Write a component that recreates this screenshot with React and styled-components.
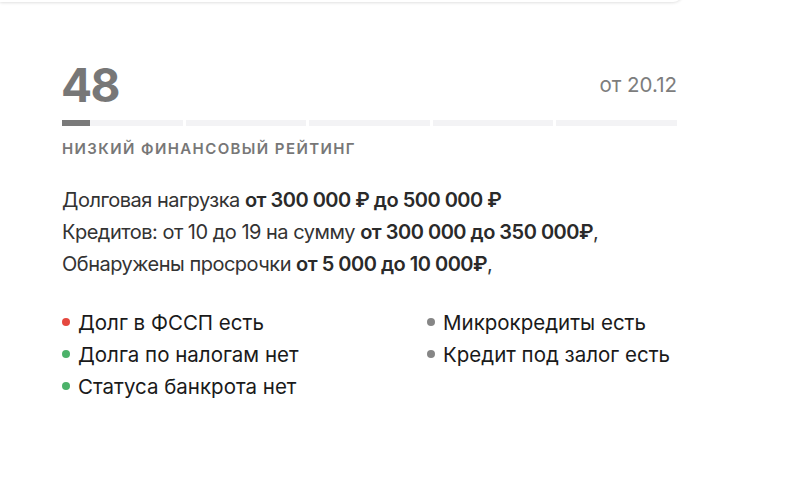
import React from "react";
import styled, { createGlobalStyle } from "styled-components";

const Global = createGlobalStyle`
  html, body { margin: 0; padding: 0; background: #fff; }
  body { font-family: Inter, "Noto Sans", sans-serif; -webkit-font-smoothing: antialiased; }
`;

const Page = styled.div`
  width: 800px;
  height: 504px;
  overflow: hidden;
  background: #fff;
`;

const PrevCard = styled.div`
  width: 683px;
  height: 20px;
  margin-top: -18px;
  border-radius: 0 0 10px 0;
  background: #fff;
  box-shadow: 0 1px 3px rgba(0, 0, 0, 0.12);
`;

const Card = styled.section`
  width: 615px;
  margin: 58px 0 0 62px;
  display: flex;
  flex-direction: column;
`;

const Header = styled.div`
  display: flex;
  align-items: center;
  justify-content: space-between;
  height: 50px;
`;

const Score = styled.div`
  font-size: 46px;
  font-weight: 700;
  color: #777;
  letter-spacing: -1.5px;
  line-height: 1;
  margin-left: -1px;
`;

const DateLabel = styled.div`
  font-size: 20.5px;
  color: #7d7d7d;
  line-height: 1;
`;

const Bar = styled.div`
  margin-top: 10px;
  display: grid;
  grid-template-columns: repeat(5, 1fr);
  gap: 3px;
`;

const Segment = styled.div`
  height: 6px;
  background: #f3f3f5;
  overflow: hidden;
`;

const Fill = styled.div`
  height: 100%;
  background: #7a7a7a;
`;

const RatingLabel = styled.div`
  margin-top: 14px;
  font-size: 15px;
  line-height: 18px;
  font-weight: 600;
  letter-spacing: 1.4px;
  color: #777;
  text-transform: uppercase;
`;

const Details = styled.div`
  margin-top: 26px;
  font-size: 20px;
  line-height: 32px;
  color: #333;
  letter-spacing: -0.5px;
`;

const Line = styled.div``;

const Strong = styled.b`
  font-weight: 600;
  color: #2a2a2a;
`;

const Facts = styled.ul`
  list-style: none;
  margin: 26px 0 0;
  padding: 0;
  display: grid;
  grid-template-columns: 365px 1fr;
  grid-auto-flow: column;
  grid-template-rows: repeat(3, 32px);
`;

const Fact = styled.li`
  display: flex;
  align-items: center;
  gap: 8px;
  font-size: 20.5px;
  color: #1a1a1a;
`;

const Dot = styled.span`
  width: 8px;
  height: 8px;
  border-radius: 50%;
  flex: none;
  background: ${(p) => p.$color};
`;

const colors = { red: "#e5483f", green: "#4cb26a", gray: "#868686" };

const facts = [
  { text: "Долг в ФССП есть", c: "red" },
  { text: "Долга по налогам нет", c: "green" },
  { text: "Статуса банкрота нет", c: "green" },
  { text: "Микрокредиты есть", c: "gray" },
  { text: "Кредит под залог есть", c: "gray" },
];

export default function App() {
  return (
    <Page>
      <Global />
      <PrevCard />
      <Card>
        <Header>
          <Score>48</Score>
          <DateLabel>от 20.12</DateLabel>
        </Header>
        <Bar>
          {[0, 1, 2, 3, 4].map((i) => (
            <Segment key={i}>
              {i === 0 && <Fill style={{ width: "23%" }} />}
            </Segment>
          ))}
        </Bar>
        <RatingLabel>Низкий финансовый рейтинг</RatingLabel>
        <Details>
          <Line>
            Долговая нагрузка <Strong>от 300 000 ₽ до 500 000 ₽</Strong>
          </Line>
          <Line>
            Кредитов: от 10 до 19 на сумму <Strong>от 300 000 до 350 000₽</Strong>,
          </Line>
          <Line>
            Обнаружены просрочки <Strong>от 5 000 до 10 000₽</Strong>,
          </Line>
        </Details>
        <Facts>
          {facts.map((f) => (
            <Fact key={f.text}>
              <Dot $color={colors[f.c]} />
              {f.text}
            </Fact>
          ))}
        </Facts>
      </Card>
    </Page>
  );
}
